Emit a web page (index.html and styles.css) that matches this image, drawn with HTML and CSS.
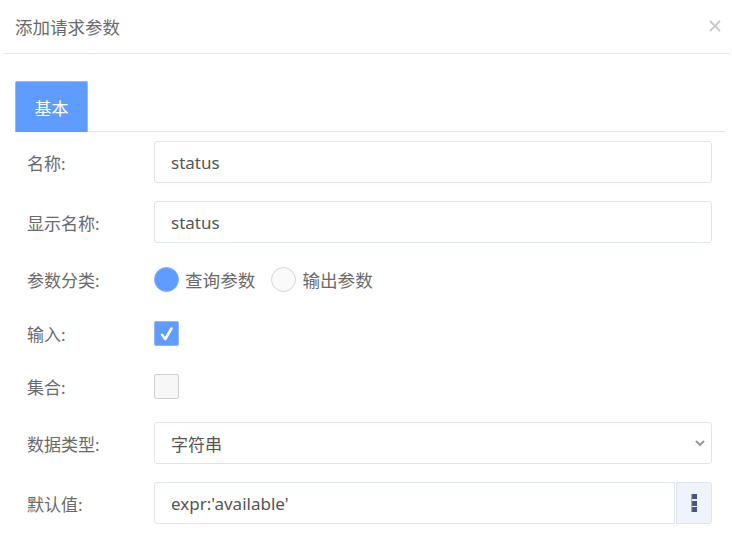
FILE: index.html
```html
<!DOCTYPE html>
<html>
<head>
<meta charset="utf-8">
<link rel="stylesheet" href="styles.css">
</head>
<body>
<div class="dialog">
  <div class="header">
    <span class="title">添加请求参数</span>
    <svg class="close" width="12" height="12" viewBox="0 0 12 12"><path d="M1 1 L11 11 M11 1 L1 11" stroke="#c9c9c9" stroke-width="1.8" fill="none"/></svg>
  </div>
  <div class="body">
    <div class="tabs">
      <div class="tab active">基本</div>
    </div>
    <div class="form">
      <div class="row">
        <div class="label">名称:</div>
        <div class="field"><div class="input">status</div></div>
      </div>
      <div class="row">
        <div class="label">显示名称:</div>
        <div class="field"><div class="input">status</div></div>
      </div>
      <div class="row row-radio">
        <div class="label">参数分类:</div>
        <div class="field radios">
          <span class="radio checked"></span><span class="radio-text">查询参数</span>
          <span class="radio"></span><span class="radio-text">输出参数</span>
        </div>
      </div>
      <div class="row row-check">
        <div class="label">输入:</div>
        <div class="field">
          <span class="checkbox checked"><svg width="24" height="24" viewBox="0 0 24 24"><path d="M7 12.8 L10.3 17 L16.5 6.5" stroke="#fff" stroke-width="2.6" fill="none" stroke-linecap="round" stroke-linejoin="round"/></svg></span>
        </div>
      </div>
      <div class="row row-check">
        <div class="label">集合:</div>
        <div class="field"><span class="checkbox"></span></div>
      </div>
      <div class="row">
        <div class="label">数据类型:</div>
        <div class="field">
          <div class="input select"><span>字符串</span>
            <svg class="chev" width="10" height="7" viewBox="0 0 10 7"><path d="M1 1 L5 5 L9 1" stroke="#999" stroke-width="2" fill="none"/></svg>
          </div>
        </div>
      </div>
      <div class="row">
        <div class="label">默认值:</div>
        <div class="field group">
          <div class="input grow">expr:'available'</div>
          <div class="btn">
            <svg width="6" height="19" viewBox="0 0 6 19"><rect x="0" y="0" width="6" height="5" fill="#3b5591"/><rect x="0" y="7" width="6" height="5" fill="#3b5591"/><rect x="0" y="13" width="6" height="5" fill="#3b5591"/><rect x="0" y="0" width="1.2" height="18" fill="#e6a15c" opacity="0.9"/></svg>
          </div>
        </div>
      </div>
    </div>
  </div>
</div>
</body>
</html>
```
FILE: styles.css
```css
* { box-sizing: border-box; }
html, body { margin: 0; padding: 0; background: #fff; }
body {
  font-family: "Noto Sans", "Noto Sans CJK SC", sans-serif;
  color: #666;
  width: 732px;
  height: 534px;
  overflow: hidden;
}
.dialog { width: 732px; }
.header {
  height: 54px;
  margin: 0 2px 0 3px;
  padding: 0 9px 0 12px;
  border-bottom: 1px solid #e3e8ef;
  display: flex;
  align-items: center;
  justify-content: space-between;
}
.title {
  font-size: 17.5px;
  color: #6a6a6a;
}
.close { margin-top: -2px; }
.body { padding: 27px 7px 0 15px; }
.tabs {
  display: flex;
  border-bottom: 1px solid #e3e8ef;
  height: 51px;
}
.tab {
  width: 73px;
  height: 51px;
  display: flex;
  align-items: center;
  justify-content: center;
  font-size: 17px;
  color: #fff;
  background: #5e9dff;
  border: 1px solid #8fb9ff;
  border-bottom: none;
  border-radius: 2px 2px 0 0;
}
.form { padding: 9px 13px 0 12px; }
.row {
  display: flex;
  align-items: center;
  height: 42px;
  margin-bottom: 18px;
}
.row-radio { height: 37px; margin-bottom: 18px; }
.row-check { height: 35px; }
.label {
  width: 127px;
  font-size: 17px;
  color: #6a6a6a;
  flex: none;
}
.field { flex: 1; display: flex; align-items: center; height: 100%; }
.input {
  flex: 1;
  height: 42px;
  border: 1px solid #dfe5ee;
  border-radius: 3px;
  padding: 0 16px;
  display: flex;
  align-items: center;
  font-size: 17px;
  color: #555;
}
.select { justify-content: space-between; padding-right: 6px; }
.chev { margin-top: 1px; }
.radio {
  width: 25px;
  height: 25px;
  border-radius: 50%;
  border: 1px solid #d6d6d6;
  background: #fafafa;
  flex: none;
}
.radio.checked { background: #5e9dff; border-color: #7eb0ff; }
.radio-text { font-size: 17.6px; color: #6a6a6a; margin-left: 6px; margin-right: 16px; }
.checkbox {
  width: 25px;
  height: 25px;
  border: 1px solid #cfcfcf;
  border-radius: 2px;
  background: #f7f7f7;
  display: inline-flex;
  align-items: center;
  justify-content: center;
}
.checkbox.checked { background: #5e9dff; border-color: #8db7ff; }
.checkbox svg { display: block; margin: -1px; }
.group { gap: 1px; }
.grow { border-radius: 3px 0 0 3px; }
.btn {
  width: 36px;
  height: 42px;
  background: #eef3fc;
  border: 1px solid #dfe5ee;
  border-radius: 0 3px 3px 0;
  display: flex;
  align-items: center;
  justify-content: center;
  flex: none;
}
```
